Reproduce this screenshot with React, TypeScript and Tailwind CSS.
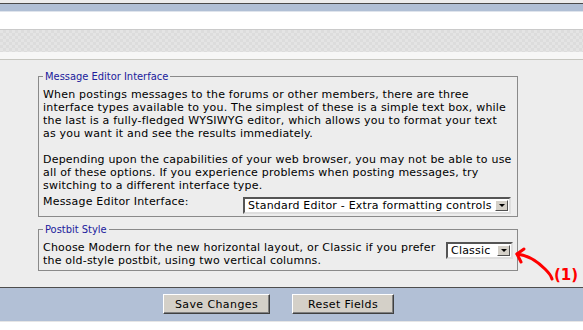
export default function App() {
  return (
    <div className="relative w-[583px] h-[330px] overflow-hidden bg-white font-['Verdana','DejaVu_Sans',sans-serif] text-[11px] leading-[13px] text-black">
      {/* top chrome */}
      <div className="h-[3px] bg-[#ececec]" />
      <div className="h-[1px] bg-[#4a4a4a]" />
      <div className="h-[7px] bg-[#b0bfd5]" />
      <div className="h-[1px] bg-[#dfe4ec]" />
      <div className="h-[17px] bg-white" />
      <div className="h-[1px] bg-[#cacaca]" />
      <div className="h-[22px] bg-[#e0e0e0] bg-[repeating-conic-gradient(#dcdcdc_0%_25%,#e4e4e4_0%_50%)] bg-[length:6px_6px]" />
      <div className="h-[7px] bg-[#f6f6f6]" />
      <div className="h-[1px] bg-[#c6c6c0]" />

      {/* options panel */}
      <div className="h-[227px] bg-[#ededed] pl-[38px] pt-[10px] tracking-[0.2px]">
        <fieldset className="w-[480px] min-w-0 border border-[#8a8a8a] px-[4px] pt-[5px] pb-[2px]">
          <legend className="px-[2px] text-[#20209c] tracking-normal font-['DejaVu_Sans_Condensed','Liberation_Sans',sans-serif]">
            Message Editor Interface
          </legend>
          <p className="whitespace-nowrap">
            When postings messages to the forums or other members, there are three
            <br />
            interface types available to you. The simplest of these is a simple text box, while
            <br />
            the last is a fully-fledged WYSIWYG editor, which allows you to format your text
            <br />
            as you want it and see the results immediately.
            <br />
            <br />
            Depending upon the capabilities of your web browser, you may not be able to use
            <br />
            all of these options. If you experience problems when posting messages, try
            <br />
            switching to a different interface type.
          </p>
          <div className="flex items-start justify-between pr-[2px]">
            <span className="mt-[3px]">Message Editor Interface:</span>
            <div className="mt-[5px]">
              <FakeSelect label="Standard Editor - Extra formatting controls" width="w-[268px]" />
            </div>
          </div>
        </fieldset>

        <fieldset className="w-[480px] min-w-0 mt-[6px] border border-[#8a8a8a] px-[4px] pt-[5px] pb-[3px]">
          <legend className="px-[2px] text-[#20209c] tracking-normal font-['DejaVu_Sans_Condensed','Liberation_Sans',sans-serif]">
            Postbit Style
          </legend>
          <div className="flex items-start justify-between">
            <p className="whitespace-nowrap">
              Choose Modern for the new horizontal layout, or Classic if you prefer
              <br />
              the old-style postbit, using two vertical columns.
            </p>
            <div className="pt-[1px]">
              <FakeSelect label="Classic" width="w-[67px]" />
            </div>
          </div>
        </fieldset>
      </div>

      {/* bottom bar */}
      <div className="h-[1px] bg-[#4e4e4e]" />
      <div className="h-[33px] bg-[#b2c0d6] flex items-start gap-[22px] pl-[163px] pt-[6px] tracking-[0.4px]">
        <button className="w-[107px] h-[20px] bg-[#d4d0c8] border border-t-white border-l-white border-b-[#404040] border-r-[#404040] shadow-[inset_-1px_-1px_0_#808080]">
          Save Changes
        </button>
        <button className="w-[102px] h-[20px] bg-[#d4d0c8] border border-t-white border-l-white border-b-[#404040] border-r-[#404040] shadow-[inset_-1px_-1px_0_#808080]">
          Reset Fields
        </button>
      </div>
      <div className="h-[1px] bg-[#e6e6e6]" />

      {/* annotation */}
      <svg className="absolute left-[510px] top-[240px]" width="73" height="50" viewBox="0 0 73 50" fill="none">
        <path d="M7 14 C 18 15, 28 22, 35 29 S 41 37, 42 39" stroke="#ff0000" strokeWidth="3" strokeLinecap="round" />
        <path d="M14 9 L7 14 L11 22" stroke="#ff0000" strokeWidth="3" strokeLinecap="round" strokeLinejoin="round" />
      </svg>
      <span className="absolute left-[554px] top-[266px] text-[15px] leading-[18px] font-bold text-[#ff0000]">(1)</span>
    </div>
  )
}

function FakeSelect({ label, width }: { label: string; width: string }) {
  return (
    <div
      className={`${width} h-[17px] flex items-center bg-white border-2 border-t-[#555] border-l-[#555] border-b-[#dedede] border-r-[#dedede] pl-[3px] pr-[1px]`}
    >
      <span className="flex-1 whitespace-nowrap overflow-hidden leading-[13px]">{label}</span>
      <span className="w-[13px] h-[11px] flex items-center justify-center bg-[#d4d0c8] border border-t-white border-l-white border-b-[#505050] border-r-[#505050]">
        <span className="w-0 h-0 border-l-[3px] border-r-[3px] border-t-[3px] border-l-transparent border-r-transparent border-t-black" />
      </span>
    </div>
  )
}
